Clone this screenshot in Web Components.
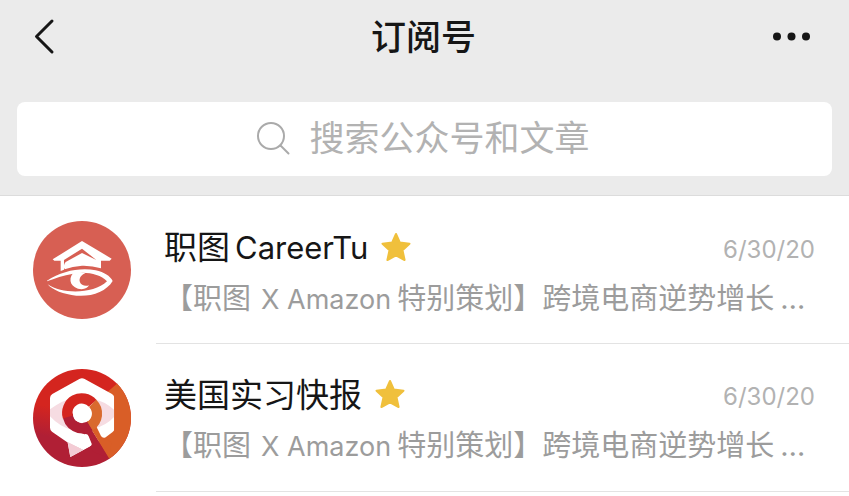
<!DOCTYPE html>
<html lang="zh-CN">
<head>
<meta charset="utf-8">
<meta name="viewport" content="width=device-width, initial-scale=1">
<title>订阅号</title>
<style>
  body { margin: 0; background: #fff; color: #161616; font-family: Inter, "Noto Sans CJK SC", sans-serif; }
</style>
</head>
<body>
<subscriptions-page></subscriptions-page>

<template id="page-tpl">
  <style>
    :host { display: block; }
    header { background: #ebebeb; border-bottom: 1px solid #dcdcdc; padding-bottom: 19px; }
    ul { list-style: none; margin: 0; padding: 0; }
    .name-latin { font-size: 31px; margin-left: 5px; }
    .latin { font-size: 27px; margin: 0 6px 0 10px; }
    .dots { margin-left: 6px; }
  </style>
  <header>
    <nav-bar><span>订阅号</span></nav-bar>
    <search-box></search-box>
  </header>
  <main>
    <ul>
      <li><account-row date="6/30/20">
        <career-logo slot="avatar"></career-logo>
        <span slot="name">职图<span class="name-latin">CareerTu</span></span>
        <span slot="summary">【职图<span class="latin">X Amazon</span>特别策划】跨境电商逆势增长<span class="dots">…</span></span>
      </account-row></li>
      <li><account-row date="6/30/20">
        <intern-logo slot="avatar"></intern-logo>
        <span slot="name">美国实习快报</span>
        <span slot="summary">【职图<span class="latin">X Amazon</span>特别策划】跨境电商逆势增长<span class="dots">…</span></span>
      </account-row></li>
    </ul>
  </main>
</template>

<template id="nav-tpl">
  <style>
    :host { display: grid; grid-template-columns: 1fr auto 1fr; align-items: center; height: 74px; padding: 0 34px 0 32px; margin-bottom: 28px; }
    h1 { margin: 0; font-size: 35px; line-height: 48px; font-weight: 500; }
    button { border: 0; padding: 0; background: none; color: inherit; display: flex; justify-self: start; }
    button:last-child { justify-self: end; }
    svg { display: block; }
  </style>
  <button type="button" aria-label="返回">
    <svg width="24" height="40" viewBox="0 0 24 40" fill="none" stroke="currentColor" stroke-width="3" stroke-linecap="round" stroke-linejoin="round"><path d="M20 4 4.500 19.500 20 35"/></svg>
  </button>
  <h1><slot></slot></h1>
  <button type="button" aria-label="更多">
    <svg width="46" height="40" viewBox="0 0 46 40" fill="currentColor"><circle cx="8" cy="19.500" r="4"/><circle cx="22.500" cy="19.500" r="4"/><circle cx="37" cy="19.500" r="4"/></svg>
  </button>
</template>

<template id="search-tpl">
  <style>
    :host { display: block; padding: 0 17px; }
    label { display: flex; align-items: center; justify-content: center; gap: 18px; height: 72px; padding-bottom: 2px; border-radius: 8px; background: #fff; color: #aaa; }
    svg { flex: none; }
    input { width: 284px; border: 0; padding: 0; outline: 0; background: none; color: #161616; font: inherit; font-size: 35px; line-height: 52px; height: 52px; }
    input::placeholder { color: #b2b2b2; opacity: 1; }
  </style>
  <label>
    <svg width="36" height="36" viewBox="0 0 36 36" fill="none" stroke="currentColor" stroke-width="2" stroke-linecap="round" aria-hidden="true"><circle cx="15" cy="16" r="13"/><path d="m24.500 25.500 8 8"/></svg>
    <input type="text" placeholder="搜索公众号和文章" aria-label="搜索公众号和文章">
  </label>
</template>

<template id="row-tpl">
  <style>
    :host { display: flex; gap: 25px; padding-left: 33px; }
    .avatar { flex: none; width: 98px; padding: 25px 0; }
    .body { flex: 1; min-width: 0; border-bottom: 1px solid #e3e3e3; padding: 25px 34px 0 8px; }
    .top { display: flex; align-items: center; }
    h2 { margin: 0; font-size: 33px; line-height: 52px; font-weight: 400; white-space: nowrap; }
    svg { flex: none; margin-left: 13px; margin-bottom: 2px; }
    time { margin-left: auto; padding-top: 4px; font-size: 24px; line-height: 32px; color: #b2b2b2; }
    p { margin: 0; font-size: 29px; line-height: 50px; color: #9c9c9c; white-space: nowrap; overflow: hidden; text-overflow: ellipsis; }
  </style>
  <div class="avatar"><slot name="avatar"></slot></div>
  <div class="body">
    <div class="top">
      <h2><slot name="name"></slot></h2>
      <svg width="30" height="30" viewBox="0 0 30 30" role="img" aria-label="星标"><path d="M15 2 18.900 10.600 28.500 11.700 21.500 18.200 23.600 28 15 23.300 6.400 28 8.500 18.200 1.500 11.700 11.100 10.600Z" fill="#f0c03c" stroke="#f0c03c" stroke-width="2" stroke-linejoin="round"/></svg>
      <time></time>
    </div>
    <p><slot name="summary"></slot></p>
  </div>
</template>

<template id="career-tpl">
  <style>:host { display: block; } svg { display: block; width: 100%; }</style>
  <svg viewBox="0 0 294 294" aria-hidden="true">
    <circle cx="147" cy="147" r="147" fill="#d75f53"/>
    <g fill="#fff">
      <path d="M147 60 236 113 230 119H204V142Q176 133 147 134Q118 136 95 145L92 137Q94 127 98 123L147 96 190 117 147 83 93 117V146L83 150V119H64L59 115Z"/>
      <path d="M42 179C86 150 142 139 188 148C214 154 231 165 239 180C220 212 175 228 130 224C91 220 59 208 44 190C92 222 183 218 222 181C201 159 160 151 121 158C90 163 66 172 42 181Z"/>
      <path d="M127 151C105 166 108 196 135 203C151 207 164 202 168 193C157 197 144 193 141 184C136 171 147 160 157 157Z"/>
    </g>
  </svg>
</template>

<template id="intern-tpl">
  <style>:host { display: block; } svg { display: block; width: 100%; }</style>
  <svg viewBox="0 0 294 294" aria-hidden="true">
    <defs>
      <clipPath id="disc"><circle cx="147" cy="147" r="147"/></clipPath>
      <clipPath id="hex"><path d="M139 30Q147 25 155 30L237 75Q244 79 244 87V180Q244 186 238 190L214 208 150 243 106 222 57 188Q51 184 51 176V87Q51 79 58 75Z"/></clipPath>
      <linearGradient id="red" x1="0.600" y1="0" x2="0.400" y2="1"><stop offset="0.450" stop-color="#d4251f"/><stop offset="0.750" stop-color="#b01f35"/></linearGradient>
    </defs>
    <g clip-path="url(#disc)">
      <path d="M0 0H294V294H0Z" fill="url(#red)"/>
      <path d="M251 45 147 134 229 268 294 294V0Z" fill="#d95e27"/>
      <g clip-path="url(#hex)">
        <path d="M51 25H244V243H51Z" fill="#fff"/>
        <path d="M51 121Q92 92 120 88V184Q80 174 51 142ZM180 90Q215 96 244 123V143Q220 169 184 178Z" fill="#f6dce2"/>
      </g>
      <path d="M150 243 104 221 112 264 173 231 176 226 165 195 140 190Z" fill="#fff"/>
      <path d="M104 219 112 264 151 243Z" fill="#f3cbd4"/>
      <path d="M150 156H160L229 268 180 248 171 233Q178 230 176 224L167 202Q163 193 154 196L140 190Z" fill="#b01f35"/>
      <path d="M158 153 182 156 204 201Q208 208 216 206L235 220 229 269Z" fill="#d95e27"/>
      <g fill="none" stroke-width="31">
        <path d="M171 171A43.500 43.500 0 0 1 104.500 134" stroke="#b01f35"/>
        <path d="M104.500 144A43.500 43.500 0 0 1 179 103" stroke="#d4251f"/>
        <path d="M179 103A43.500 43.500 0 0 1 171 171" stroke="#d96a2e"/>
      </g>
      <circle cx="148" cy="134" r="28" fill="#fff"/>
    </g>
  </svg>
</template>

<script>
  const define = (name, templateId, connected) => {
    customElements.define(name, class extends HTMLElement {
      constructor() {
        super();
        this.attachShadow({ mode: "open" }).append(
          document.getElementById(templateId).content.cloneNode(true)
        );
      }
      connectedCallback() { if (connected) connected(this); }
    });
  };
  define("career-logo", "career-tpl");
  define("intern-logo", "intern-tpl");
  define("nav-bar", "nav-tpl");
  define("search-box", "search-tpl");
  define("account-row", "row-tpl", el => {
    el.shadowRoot.querySelector("time").textContent = el.getAttribute("date");
  });
  define("subscriptions-page", "page-tpl");
</script>
</body>
</html>
